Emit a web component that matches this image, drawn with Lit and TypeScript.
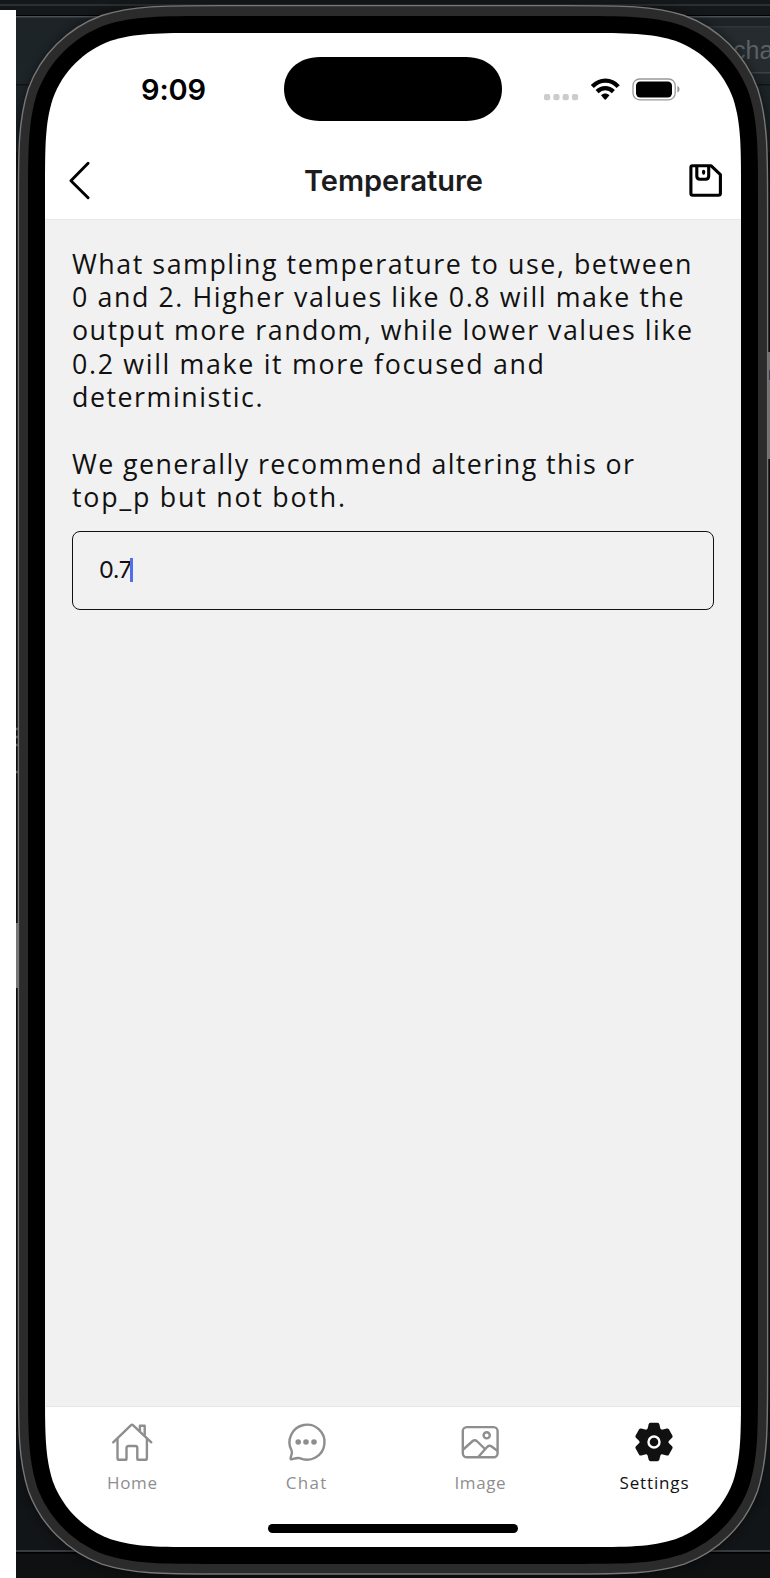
import { LitElement, html, svg, css } from "lit";
import { customElement, property, state } from "lit/decorators.js";

/** Rounded rectangle whose corners ease into the straight sides. */
function smoothRect(x: number, y: number, w: number, h: number, r: number): string {
  const a = 1.528665 * r, b = 1.088493 * r, c = 0.868407 * r, d = 0.631494 * r;
  const e = 0.074911 * r, f = 0.372824 * r, g = 0.16906 * r;
  const R = x + w, B = y + h;
  return [
    `M${x + a} ${y}H${R - a}`,
    `C${R - b} ${y} ${R - c} ${y} ${R - d} ${y + e}`,
    `C${R - f} ${y + g} ${R - g} ${y + f} ${R - e} ${y + d}`,
    `C${R} ${y + c} ${R} ${y + b} ${R} ${y + a}V${B - a}`,
    `C${R} ${B - b} ${R} ${B - c} ${R - e} ${B - d}`,
    `C${R - g} ${B - f} ${R - f} ${B - g} ${R - d} ${B - e}`,
    `C${R - c} ${B} ${R - b} ${B} ${R - a} ${B}H${x + a}`,
    `C${x + b} ${B} ${x + c} ${B} ${x + d} ${B - e}`,
    `C${x + f} ${B - g} ${x + g} ${B - f} ${x + e} ${B - d}`,
    `C${x} ${B - c} ${x} ${B - b} ${x} ${B - a}V${y + a}`,
    `C${x} ${y + b} ${x} ${y + c} ${x + e} ${y + d}`,
    `C${x + g} ${y + f} ${x + f} ${y + g} ${x + d} ${y + e}`,
    `C${x + c} ${y} ${x + b} ${y} ${x + a} ${y}Z`,
  ].join("");
}

/** One line of text, tracked so that it fills the given measure. */
@customElement("fit-text")
class FitText extends LitElement {
  static styles = css`
    :host { display: block; white-space: nowrap; }
    .line { display: inline-block; }
  `;
  @property() text = "";
  @property({ type: Number }) measure = 0;
  @state() private tracking = 0;

  firstUpdated() {
    const line = this.renderRoot.querySelector(".line") as HTMLElement;
    const natural = line.getBoundingClientRect().width;
    if (this.measure && this.text.length > 1) {
      this.tracking = (this.measure - natural) / (this.text.length - 1);
    }
  }

  render() {
    return html`<span class="line" style="letter-spacing:${this.tracking}px;margin-right:${-this.tracking}px">${this.text}</span>`;
  }
}

@customElement("desktop-backdrop")
class DesktopBackdrop extends LitElement {
  static styles = css`
    :host { display: block; }
    svg { display: block; }
    .label { font: 25px "Liberation Sans", sans-serif; fill: #5c6164; }
  `;
  render() {
    return html`<svg width="770" height="1578" viewBox="0 0 770 1578">
      <defs>
        <linearGradient id="bg" x1="0" y1="0" x2="0" y2="1">
          <stop offset="0" stop-color="#1c2226" /><stop offset=".05" stop-color="#1e2529" />
          <stop offset=".11" stop-color="#14181a" /><stop offset=".9" stop-color="#15191c" />
          <stop offset="1" stop-color="#0d0f10" />
        </linearGradient>
        <filter id="soft" x="-10%" y="-10%" width="120%" height="120%"><feGaussianBlur stdDeviation="5" /></filter>
      </defs>
      <rect width="770" height="1578" fill="url(#bg)" />
      <rect width="770" height="15" fill="#15181a" />
      <rect y="4" width="770" height="2" fill="#2a2f32" />
      <rect x="16" y="15" width="754" height="1" fill="#000" />
      <rect x="16" y="16" width="754" height="1.5" fill="#4a4f52" />
      <rect x="700" y="26" width="70" height="47" fill="#252b2f" />
      <rect x="700" y="26" width="70" height="1.5" fill="#30363a" />
      <rect x="700" y="72" width="70" height="1.5" fill="#3c4245" />
      <rect x="16" y="84" width="754" height="1.5" fill="#111415" />
      <text class="label" x="733" y="59">cha</text>
      <rect x="16" y="1508" width="754" height="43" fill="#121517" />
      <rect x="16" y="1550" width="754" height="2" fill="#393c3f" />
      <rect x="16" y="1552" width="754" height="1.5" fill="#000" />
      <path d=${smoothRect(18, 5, 750, 1570, 131)} fill="#000" opacity=".45" filter="url(#soft)" />
      <rect x="16" y="152" width="2" height="1280" fill="#0c0e0f" />
      <rect x="768" y="152" width="2" height="1280" fill="#0c0e0f" />
      <path d="M16 729h2M16 737h2M16 745h2M16 772h2" stroke="#555" stroke-width="2.5" />
      <rect x="16" y="923" width="3" height="65" fill="#747474" />
      <rect x="767.5" y="352" width="2.5" height="107" fill="#707070" />
      <path d="M769.5 370v10" stroke="#363f52" stroke-width="1" />
      <rect y="10" width="16" height="1568" fill="#fff" />
      <path d=${smoothRect(18.4, 5.6, 749.2, 1568.4, 132)} fill="#2b2b2b" stroke="#777" stroke-width="1.4" />
      <path d=${smoothRect(28, 16, 730, 1548, 122)} fill="#000" />
      <path d=${smoothRect(45, 33, 696, 1514, 104)} fill="#fff" />
    </svg>`;
  }
}

@customElement("status-bar")
class StatusBar extends LitElement {
  static styles = css`
    :host { display: grid; grid-template-columns: 239px 218px 1fr; height: 107px; }
    .time {
      padding: 39px 0 0 96px; font: 600 29px/36px Inter, sans-serif; color: #000;
    }
    .island { margin-top: 24px; display: block; }
    .signals { margin: 41px 0 0 41px; display: block; }
  `;
  render() {
    return html`
      <fit-text class="time" text="9:09" measure="65"></fit-text>
      <svg class="island" width="218" height="64" viewBox="0 0 218 64">
        <path d="M36 0H182C204 0 218 14 218 32S204 64 182 64H36C14 64 0 50 0 32S14 0 36 0Z" />
      </svg>
      <svg class="signals" width="140" height="32" viewBox="543 74 140 32">
        ${[544, 553.3, 562.6, 571.9].map((x) => svg`<rect x=${x} y="94" width="6.2" height="6.2" rx="2" fill="#ccc" />`)}
        <g fill="none" stroke="#000" stroke-width="4.3">
          <path d="M592.3 86.6C600 78.7 611 78.7 618.2 86.6" />
          <path d="M597.1 91.6C602 86.9 608.5 86.9 613.4 91.6" />
        </g>
        <path d="M601 95.2C603.7 92.8 606.8 92.8 609.5 95.2L606.3 99.1Q605.25 100.2 604.2 99.1Z" />
        <rect x="633" y="79" width="42.2" height="20.8" rx="6.5" fill="none" stroke="#999" stroke-width="1.3" />
        <rect x="636" y="81.4" width="36" height="16" rx="4.2" />
        <path d="M677.3 86c3 1 3 5.6 0 6.6z" fill="#999" />
      </svg>
    `;
  }
}

@customElement("screen-header")
class ScreenHeader extends LitElement {
  static styles = css`
    :host {
      display: grid; grid-template-columns: 237px 1fr 34px; box-sizing: border-box;
      height: 80px; padding: 21px 18px 0 22px; border-bottom: 1.5px solid #e8e8e8;
    }
    svg { display: block; fill: none; stroke: #000; stroke-linejoin: round; stroke-linecap: round; }
    .title { font: 600 29px/40px Inter, sans-serif; color: #1c1c1e; }
  `;
  render() {
    return html`
      <svg width="26" height="40" viewBox="67 161 26 40" stroke-width="2.9">
        <path d="M88.1 163.3L70.9 180.7L88.1 197.8" />
      </svg>
      <fit-text class="title" text="Temperature" measure="179"></fit-text>
      <svg width="34" height="36" viewBox="689 161 34 36" stroke-width="3.1">
        <path d="M692.5 165.8H711.2L720.4 174.7V193.2Q720.4 195.2 718.4 195.2H692.7Q690.9 195.2 690.9 193.2V167.5Q690.9 165.8 692.5 165.8Z" />
        <path d="M696.8 166.5V176Q696.8 179.2 700 179.2H705.6Q708.7 179.2 708.7 176V166.5" />
        <path d="M703.6 171.3V173.1" />
      </svg>
    `;
  }
}

@customElement("temperature-form")
class TemperatureForm extends LitElement {
  static styles = css`
    :host { display: block; flex: 1; background: #f1f1f1; padding: 26.5px 27px 0; }
    .copy { font: 26.8px/33.4px "Open Sans", sans-serif; color: #111; display: flex; flex-direction: column; }
    .para + .para { margin-top: 33.4px; }
    .field {
      box-sizing: border-box; height: 79px; margin-top: 17.2px; padding-left: 26px;
      border: 1.3px solid #111; border-radius: 8px; display: flex; align-items: center;
      font: 23.5px/30px Inter, sans-serif; color: #111;
    }
    .caret { width: 3px; height: 24px; background: #4f6fec; margin-left: -2px; }
  `;
  private paragraphs: [string, number][][] = [
    [
      ["What sampling temperature to use, between", 619.5],
      ["0 and 2. Higher values like 0.8 will make the", 611.5],
      ["output more random, while lower values like", 620],
      ["0.2 will make it more focused and", 472],
      ["deterministic.", 190.5],
    ],
    [
      ["We generally recommend altering this or", 562],
      ["top_p but not both.", 273],
    ],
  ];
  render() {
    return html`
      <div class="copy">
        ${this.paragraphs.map((lines) => html`<div class="para">
          ${lines.map(([text, width]) => html`<fit-text .text=${text} .measure=${width}></fit-text>`)}
        </div>`)}
      </div>
      <div class="field"><fit-text text="0.7" measure="33"></fit-text><span class="caret"></span></div>
    `;
  }
}

@customElement("tab-bar")
class TabBar extends LitElement {
  static styles = css`
    :host {
      display: grid; grid-template-columns: repeat(4, 1fr); grid-template-rows: 1fr 23px; box-sizing: border-box;
      height: 141px; border-top: 1px solid #e6e6e6;
    }
    .tab {
      display: flex; flex-direction: column; align-items: center; padding-top: 13px;
      font: 17px/24px "Open Sans", sans-serif; color: #8e8e8f;
    }
    .tab.active { color: #111; }
    svg {
      display: block; margin: 0 1px 6.5px 0; fill: none; stroke: currentColor; stroke-width: 2.4;
      stroke-linecap: round; stroke-linejoin: round;
    }
    .solid { fill: currentColor; stroke: none; }
    .ring { stroke: #fff; stroke-width: 2.4; }
    .indicator { grid-column: 1 / -1; justify-self: center; width: 250px; height: 9px; border-radius: 5px; background: #000; }
  `;
  private tooth = "M-6.8-12L-5.3-17.8Q-4.9-19.2-3.5-19.2H3.5Q4.9-19.2 5.3-17.8L6.8-12Z";
  private tabs = [
    {
      name: "Home", width: 50,
      icon: svg`<path d="M-18.8 .3L-1.2-16.7Q0-17.8 1.2-16.7L19.3 .3" />
        <path d="M-14.5-3V16.2Q-14.5 17.8-12.9 17.8H-6.9Q-5.5 17.8-5.5 16.4V6Q-5.5 4-3.5 4H3.3Q5.3 4 5.3 6V16.4Q5.3 17.8 6.7 17.8H13.2Q14.9 17.8 14.9 16.2V-3" />
        <path d="M7.9-10.8V-16.3H12.7V-6.5" />`,
    },
    {
      name: "Chat", width: 40.5,
      icon: svg`<path d="M-14.4 8.5A17.5 17.5 0 1 1-6.3 16.1C-9.3 15.4-12.5 17-14.2 17.4Q-15.6 17.6-15.4 16.1C-15 13.5-13.3 11-14.4 8.5Z" />
        <circle class="solid" cx="-7.8" cy="0" r="2.8" /><circle class="solid" cx="0" cy="0" r="2.8" /><circle class="solid" cx="8" cy="0" r="2.8" />`,
    },
    {
      name: "Image", width: 51,
      icon: svg`<rect x="-17.2" y="-14.9" width="34.8" height="30.2" rx="4" />
        <circle cx="6.7" cy="-6.7" r="3.1" />
        <path d="M-16.8 7.5L-7.3-1Q-5.3-2.7-3.3-1L4.5 6.5" />
        <path d="M-1.5 14.8L7.3 4.8Q9.2 2.9 11.3 4.3L17 8.5" />`,
    },
    {
      name: "Settings", width: 69, active: true,
      icon: svg`<g class="solid"><circle r="14.4" />
        ${[0, 60, 120, 180, 240, 300].map((a) => svg`<path transform="rotate(${a})" d=${this.tooth} />`)}</g>
        <circle class="ring" r="5.5" />`,
    },
  ];
  render() {
    return html`
      ${this.tabs.map((t) => html`<div class="tab ${t.active ? "active" : ""}">
        <svg width="44" height="44" viewBox="-22 -22 44 44">${t.icon}</svg>
        <fit-text .text=${t.name} .measure=${t.width}></fit-text>
      </div>`)}
      <div class="indicator"></div>
    `;
  }
}

@customElement("app-root")
class AppRoot extends LitElement {
  static styles = css`
    :host { display: grid; width: 770px; height: 1578px; overflow: hidden; }
    .backdrop, .screen { grid-area: 1 / 1; }
    .screen { margin: 33px 29px 31px 45px; display: flex; flex-direction: column; position: relative; }
  `;
  render() {
    return html`
      <desktop-backdrop class="backdrop"></desktop-backdrop>
      <div class="screen">
        <status-bar></status-bar>
        <screen-header></screen-header>
        <temperature-form></temperature-form>
        <tab-bar></tab-bar>
      </div>
    `;
  }
}
